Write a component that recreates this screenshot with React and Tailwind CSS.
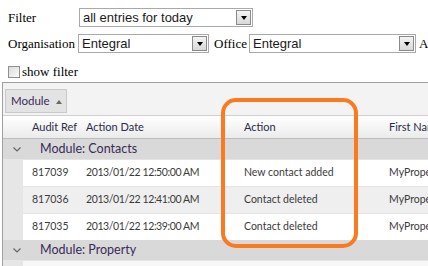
import React from 'react'

const serif = { fontFamily: '"Liberation Serif", "Times New Roman", serif' }

function Select({ value, className = '' }) {
  return (
    <div className={`flex h-[19px] shrink-0 items-stretch border border-[#a9a9a9] bg-white ${className}`}>
      <div className="flex-1 truncate px-[3px] text-[13px] leading-[17px] text-[#1a1a1a] font-['Liberation_Sans',Arial,sans-serif]">
        {value}
      </div>
      <div className="m-[1px] flex w-[15px] items-center justify-center border border-[#8a8a8a] bg-gradient-to-b from-[#f4f4f4] to-[#d8d8d8]">
        <span className="h-0 w-0 border-x-[3.5px] border-t-[4px] border-x-transparent border-t-black" />
      </div>
    </div>
  )
}

const rows = [
  { ref: '817039', date: '2013/01/22 12:50:00 AM', action: 'New contact added', alt: false },
  { ref: '817036', date: '2013/01/22 12:41:00 AM', action: 'Contact deleted', alt: true },
  { ref: '817035', date: '2013/01/22 12:39:00 AM', action: 'Contact deleted', alt: false },
]

function GroupRow({ label }) {
  return (
    <div className="flex h-[20px] items-center bg-[#d9d9d9] text-[12.5px] text-[#3a2a5a]">
      <span className="flex w-[37px] shrink-0 pl-[10px]">
        <svg width="8" height="5" viewBox="0 0 8 5" fill="none" stroke="#666" strokeWidth="1.2">
          <path d="M0.5 0.5 L4 4 L7.5 0.5" />
        </svg>
      </span>
      <span>{label}</span>
    </div>
  )
}

export default function App() {
  return (
    <div className="relative h-[266px] w-[428px] overflow-hidden bg-white">
      <div className="px-[8px] pt-[8px] text-[13px] text-black" style={serif}>
        <div className="flex h-[19px] items-center">
          <span className="w-[71px] shrink-0">Filter</span>
          <Select value="all entries for today" className="w-[174px]" />
        </div>
        <div className="mt-[7px] flex h-[19px] items-center whitespace-nowrap">
          <span className="w-[70px] shrink-0">Organisation</span>
          <Select value="Entegral" className="w-[131px]" />
          <span className="ml-[5px] w-[35px] shrink-0">Office</span>
          <Select value="Entegral" className="w-[167px]" />
          <span className="ml-[3px]">A</span>
        </div>
        <div className="mt-[12px] flex h-[14px] items-center">
          <span className="h-[12px] w-[12px] border border-[#8f8f8f] bg-gradient-to-br from-[#dcdcdc] to-[#fafafa]" />
          <span className="ml-[2px]">show filter</span>
        </div>
      </div>

      <div className="mt-[3px] ml-[2px] overflow-hidden border-t border-l border-[#a0a0a0] text-[10.5px] text-[#3b3b3b] font-['Lato','Open_Sans',sans-serif]">
        <div className="flex h-[33px] items-start border-b border-[#cfcfcf] bg-[#f3f3f3] pl-[2px] pt-[6px]">
          <div className="flex h-[24px] w-[62px] items-center border border-[#c9c9c9] bg-[#e3e3e3] pl-[5px] text-[11.5px] text-[#3a2a5a]">
            Module
            <span className="ml-[6px] mt-[1px] h-0 w-0 border-x-[3.5px] border-b-[4px] border-x-transparent border-b-[#666]" />
          </div>
        </div>
        <div className="flex h-[23px] items-center whitespace-nowrap border-b border-[#bdbdbd] bg-gradient-to-b from-white to-[#ebebeb] text-[11px] text-[#2b2b4a]">
          <span className="w-[29px] shrink-0" />
          <span className="w-[54px] shrink-0">Audit Ref</span>
          <span className="w-[158px] shrink-0">Action Date</span>
          <span className="w-[145px] shrink-0">Action</span>
          <span>First Name</span>
        </div>
        <GroupRow label="Module: Contacts" />
        {rows.map((r) => (
          <div key={r.ref} className="flex h-[27px] whitespace-nowrap">
            <div className="w-[20px] shrink-0 bg-[#e6e6e6]" />
            <div className={`flex min-w-0 flex-1 items-center overflow-hidden border-t border-[#e4e4e4] ${r.alt ? 'bg-[#efefef]' : 'bg-white'}`}>
              <span className="w-[9px] shrink-0" />
              <span className="w-[54px] shrink-0">{r.ref}</span>
              <span className="w-[158px] shrink-0 tracking-[-0.4px]">{r.date}</span>
              <span className="w-[145px] shrink-0">{r.action}</span>
              <span>MyProperty</span>
            </div>
          </div>
        ))}
        <GroupRow label="Module: Property" />
        <div className="flex h-[10px]">
          <div className="w-[20px] shrink-0 bg-[#e6e6e6]" />
          <div className="flex-1 border-t border-[#e4e4e4] bg-[#f7f7f7]" />
        </div>
      </div>

      <div className="absolute left-[221px] top-[98px] h-[150px] w-[137px] rounded-[15px] border-[4px] border-[#fb7a20]" />
    </div>
  )
}
